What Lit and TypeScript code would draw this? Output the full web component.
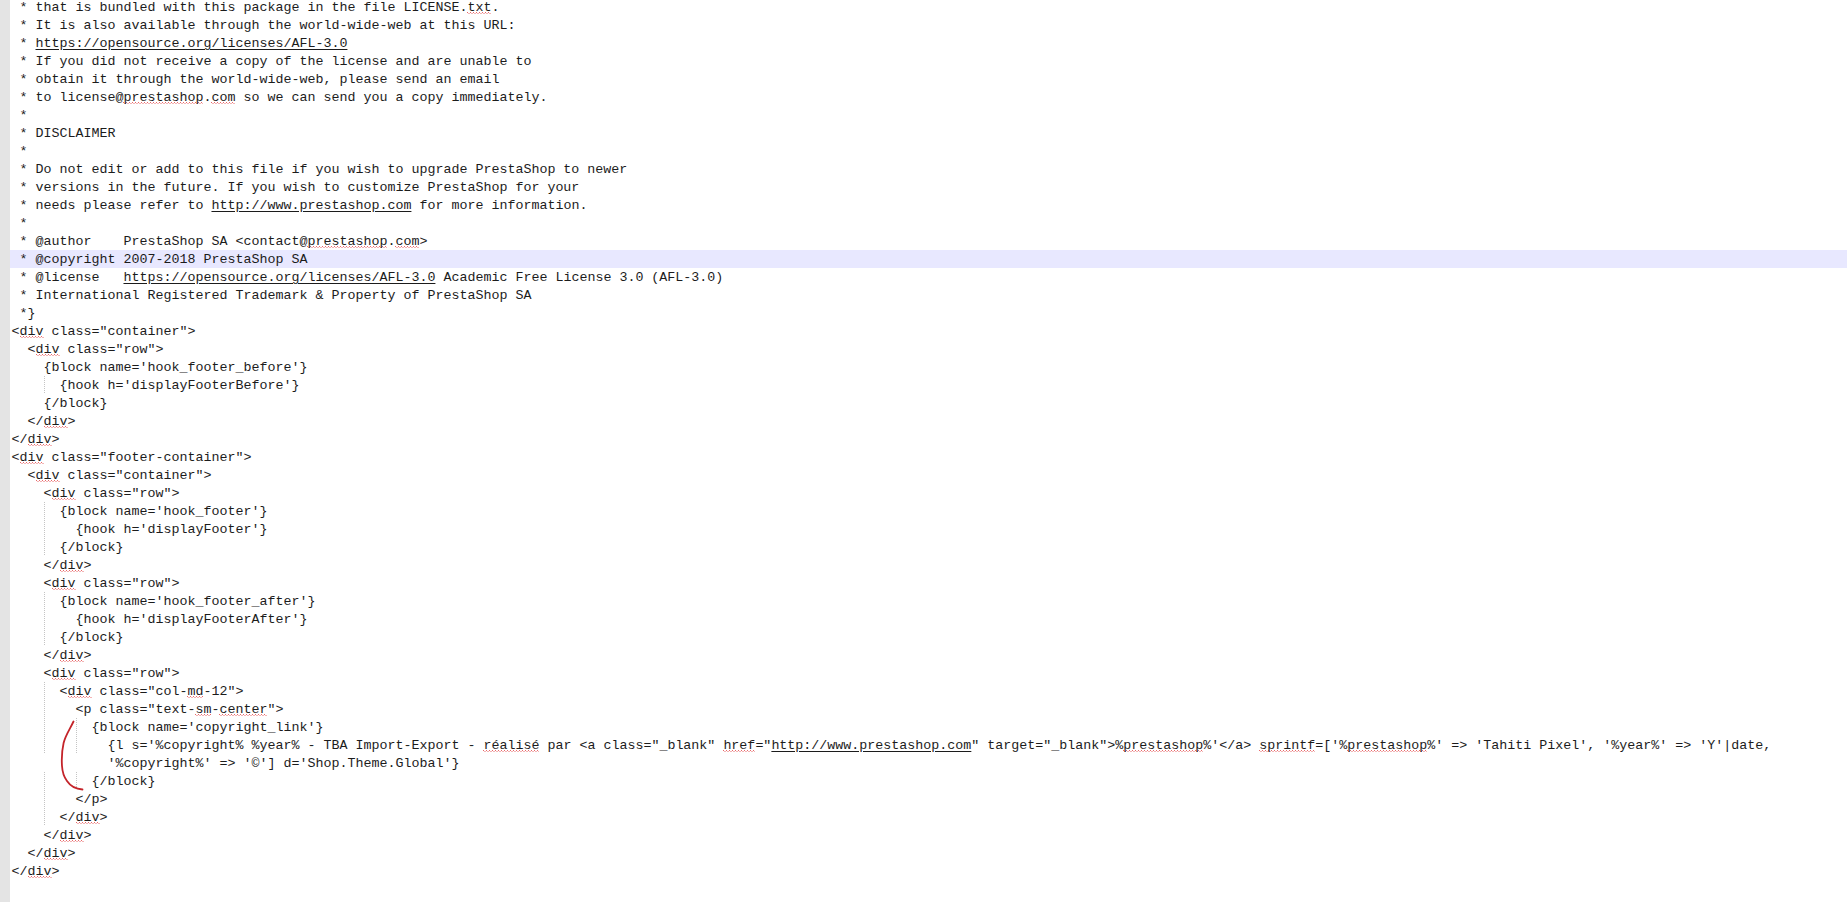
import { LitElement, html, css, svg } from "lit";
import { customElement } from "lit/decorators.js";
import { classMap } from "lit/directives/class-map.js";

const SOURCE: string[] = [
  " * that is bundled with this package in the file LICENSE.~txt~.",
  " * It is also available through the world-wide-web at this URL:",
  " * ^https://opensource.org/licenses/AFL-3.0^",
  " * If you did not receive a copy of the license and are unable to",
  " * obtain it through the world-wide-web, please send an email",
  " * to license@~prestashop~.~com~ so we can send you a copy immediately.",
  " *",
  " * DISCLAIMER",
  " *",
  " * Do not edit or add to this file if you wish to upgrade PrestaShop to newer",
  " * versions in the future. If you wish to customize PrestaShop for your",
  " * needs please refer to ^http://www.prestashop.com^ for more information.",
  " *",
  " * @author    PrestaShop SA <contact@~prestashop~.~com~>",
  " * @copyright 2007-2018 PrestaShop SA",
  " * @license   ^https://opensource.org/licenses/AFL-3.0^ Academic Free License 3.0 (AFL-3.0)",
  " * International Registered Trademark & Property of PrestaShop SA",
  " *}",
  `<~div~ class="container">`,
  `  <~div~ class="row">`,
  `    {block name='hook_footer_before'}`,
  `      {hook h='displayFooterBefore'}`,
  `    {/block}`,
  `  </~div~>`,
  `</~div~>`,
  `<~div~ class="footer-container">`,
  `  <~div~ class="container">`,
  `    <~div~ class="row">`,
  `      {block name='hook_footer'}`,
  `        {hook h='displayFooter'}`,
  `      {/block}`,
  `    </~div~>`,
  `    <~div~ class="row">`,
  `      {block name='hook_footer_after'}`,
  `        {hook h='displayFooterAfter'}`,
  `      {/block}`,
  `    </~div~>`,
  `    <~div~ class="row">`,
  `      <~div~ class="col-~md~-12">`,
  `        <p class="text-~sm~-~center~">`,
  `          {block name='copyright_link'}`,
  `            {l s='%copyright% %year% - TBA Import-Export - ~réalisé~ par <a class="_blank" ~href~="^http://www.prestashop.com^" target="_blank">%~prestashop~%'</a> ~sprintf~=['%~prestashop~%' => 'Tahiti Pixel', '%year%' => 'Y'|date,`,
  `            '%copyright%' => '©'] d='Shop.Theme.Global'}`,
  `          {/block}`,
  `        </p>`,
  `      </~div~>`,
  `    </~div~>`,
  `  </~div~>`,
  `</~div~>`,
];

const HIGHLIGHTED = 14;
const WRAPPED = 42;

function segments(line: string) {
  return line.split(/([~^][^~^]*[~^])/).map((part) => {
    if (part.startsWith("~")) return html`<span class="sq">${part.slice(1, -1)}</span>`;
    if (part.startsWith("^")) return html`<span class="link">${part.slice(1, -1)}</span>`;
    return part;
  });
}

@customElement("app-root")
export class AppRoot extends LitElement {
  static styles = css`
    :host {
      display: block;
      height: 902px;
      overflow: hidden;
      background: #fff;
    }
    .editor {
      position: relative;
      display: flex;
      height: 902px;
      overflow: hidden;
    }
    .gutter {
      flex: 0 0 10px;
      background: #e4e4e4;
    }
    .code {
      flex: 1;
      min-width: 0;
      margin-top: -2px;
      font-family: "Liberation Mono", "Courier New", monospace;
      font-size: 13.333px;
      line-height: 18px;
      color: #1c1c1c;
    }
    .line {
      box-sizing: border-box;
      height: 18px;
      padding: 1px 0 0 1.5px;
      white-space: pre;
    }
    .current {
      background: #e8e8ff;
    }
    .g1 {
      background: repeating-linear-gradient(#c4c4c4 0 1px, transparent 1px 2px) 34px 0 / 1px 100% no-repeat;
    }
    .g2 {
      background:
        repeating-linear-gradient(#c4c4c4 0 1px, transparent 1px 2px) 34px 0 / 1px 100% no-repeat,
        repeating-linear-gradient(#c4c4c4 0 1px, transparent 1px 2px) 66px 0 / 1px 100% no-repeat;
    }
    .link {
      text-decoration: underline;
      text-underline-offset: 2px;
    }
    .sq {
      background-image:
        linear-gradient(90deg, #e8686a 0 1.5px, transparent 1.5px),
        linear-gradient(90deg, #e8686a 0 1.5px, transparent 1.5px);
      background-size: 3px 1px;
      background-position: 0 calc(100% - 2px), 1.5px calc(100% - 1px);
      background-repeat: repeat-x;
    }
    .stroke {
      position: absolute;
      left: 0;
      top: 0;
      pointer-events: none;
    }
  `;

  private lineClasses(text: string, i: number) {
    const indent = text.length - text.trimStart().length;
    const guides = i === WRAPPED ? 0 : indent > 8 ? 2 : indent > 4 ? 1 : 0;
    return {
      line: true,
      current: i === HIGHLIGHTED,
      g1: guides === 1,
      g2: guides === 2,
    };
  }

  render() {
    return html`
      <div class="editor">
        <div class="gutter"></div>
        <div class="code">
          ${SOURCE.map(
            (text, i) =>
              html`<div class=${classMap(this.lineClasses(text, i))}>${segments(text)}</div>`
          )}
        </div>
        <svg class="stroke" width="120" height="902" viewBox="0 0 120 902" fill="none">
          ${svg`<path d="M73.5 721.5 C70 729 65.5 735 63.6 743 C61.8 751 61.6 760 62 766 C62.4 773 64 777 67 781 C70 785.5 75 789 82.5 789.5" stroke="#c4242a" stroke-width="1.8" stroke-linecap="round"/>`}
        </svg>
      </div>
    `;
  }
}
